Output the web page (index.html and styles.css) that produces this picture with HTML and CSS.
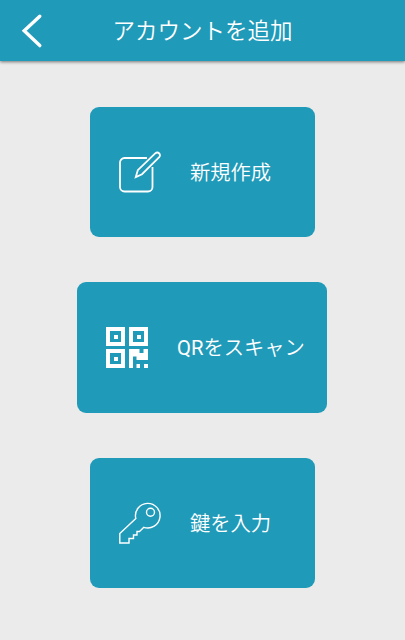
FILE: index.html
```html
<!DOCTYPE html>
<html lang="ja">
<head>
    <meta charset="UTF-8">
    <meta name="viewport" content="width=device-width, initial-scale=1.0">
    <title>アカウントを追加</title>
    <link rel="stylesheet" href="styles.css">
</head>
<body>
    <header class="header">
        <button class="back-btn" aria-label="戻る">
            <svg width="22" height="36" viewBox="0 0 22 36">
                <path d="M18.800 3.200 3.200 17.800l15.600 14.800" />
            </svg>
        </button>
        <h1>アカウントを追加</h1>
    </header>

    <main class="menu">
        <button class="card">
            <svg class="icon" viewBox="0 0 42 42" stroke-width="1.8">
                <path d="M28 7H5.500a4.500 4.500 0 0 0-4.500 4.500v24.500a4.500 4.500 0 0 0 4.500 4.500h23.500a4.500 4.500 0 0 0 4.500-4.500V16" />
                <path d="M16.800 26 18.800 19.200 36.200 2.400q2.200-1.800 4 0q1.500 2 0 3.800L23 23.200Z" />
            </svg>
            <span class="label">新規作成</span>
        </button>

        <button class="card card-wide">
            <svg class="icon icon-solid" viewBox="0 -1 42 42">
                <path fill-rule="evenodd" d="M0 0h19v19H0zM4 4v11h11V4zM8 8h4v4H8z" />
                <path fill-rule="evenodd" d="M23 0h19v19H23zM27 4v11h11V4zM31 8h4v4h-4z" />
                <path fill-rule="evenodd" d="M0 22h19v19H0zM4 26v11h11V26zM8 30h4v4H8z" />
                <path d="M23 22h10.500v4h4v-4H42v11H30.500v-3.500H27V41h-4zM30.500 37h3.500v4h-3.500zM38 37h4v4h-4z" />
            </svg>
            <span class="label"><span class="latin">QR</span>をスキャン</span>
        </button>

        <button class="card">
            <svg class="icon" viewBox="0 0 42 42" stroke-width="1.400">
                <path d="M.8 41V31.500L16.800 16.500A12.300 12.300 0 1 1 24.800 25.300L20.500 29.500H18V33H14.500V36.500H10V41Z" />
                <circle cx="31.500" cy="10.200" r="4" />
            </svg>
            <span class="label">鍵を入力</span>
        </button>
    </main>
</body>
</html>
```

FILE: styles.css
```css
* {
    box-sizing: border-box;
}
body {
    margin: 0;
    min-height: 100vh;
    background: #ebebeb;
    color: white;
    font-family: Roboto, "Noto Sans CJK JP", sans-serif;
}
button {
    border: none;
    color: inherit;
    font-family: inherit;
    cursor: pointer;
}
.header {
    display: grid;
    grid-template-columns: 64px 1fr 64px;
    align-items: center;
    height: 61px;
    background: #1f9ab8;
    box-shadow: 0 1px 3px rgba(0, 0, 0, 0.5);
}
.header h1 {
    margin: 0;
    text-align: center;
    font-size: 22.5px;
    font-weight: 350;
    line-height: 32px;
}
.back-btn {
    display: flex;
    padding: 0 0 0 21px;
    background: none;
}
.back-btn svg {
    fill: none;
    stroke: white;
    stroke-width: 3.4;
    stroke-linecap: round;
}
.menu {
    display: flex;
    flex-direction: column;
    align-items: center;
    gap: 45px;
    padding-top: 46px;
}
.card {
    display: flex;
    align-items: center;
    gap: 29px;
    width: 225px;
    height: 130.3px;
    padding: 0 0 0 29px;
    border-radius: 9px;
    background: #1f9ab8;
    font-size: 20.3px;
    font-weight: 350;
    white-space: nowrap;
}
.label {
    padding-bottom: 2px;
}
.latin {
    font-weight: 400;
}
.card-wide {
    width: 250px;
    margin-right: 1px;
}
.icon {
    width: 42px;
    height: 42px;
    flex: none;
    fill: none;
    stroke: white;
}
.icon-solid {
    fill: white;
    stroke: none;
}
```
